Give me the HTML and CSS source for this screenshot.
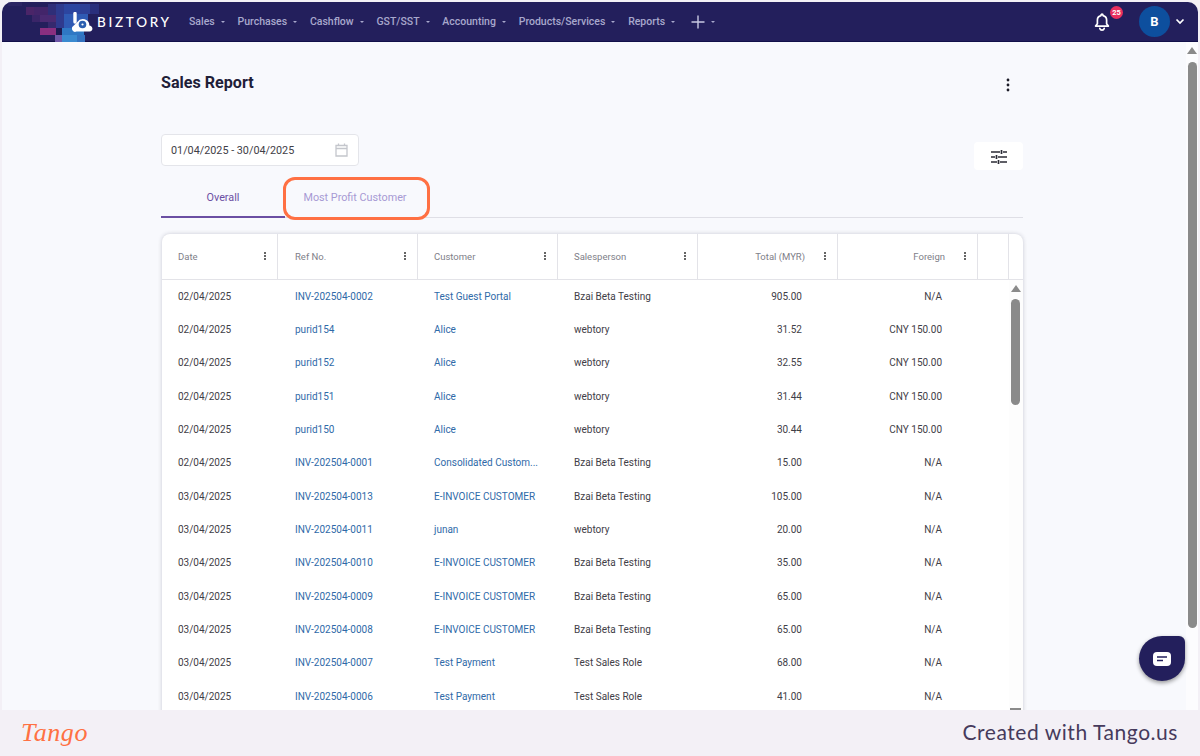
FILE: index.html
```html
<!DOCTYPE html>
<html lang="en">
<head>
<meta charset="utf-8">
<title>Sales Report</title>
<link rel="stylesheet" href="styles.css">
</head>
<body>
<div class="window">
  <header class="nav">
    <div class="brand">
      <svg class="mosaic" width="100" height="40" viewBox="0 0 100 40" aria-hidden="true">
        <rect x="6" y="0" width="14" height="4" fill="#2b2563"/>
        <rect x="24" y="5" width="8" height="8" fill="#4a2568"/>
        <rect x="32" y="5" width="14" height="8" fill="#43256a"/>
        <rect x="46" y="2" width="8" height="11" fill="#2f2e78"/>
        <rect x="54" y="2" width="8" height="10" fill="#2e3a8e"/>
        <rect x="62" y="2" width="16" height="10" fill="#2c45a0"/>
        <rect x="78" y="2" width="10" height="10" fill="#2e3f96"/>
        <rect x="88" y="2" width="9" height="10" fill="#2a2f7c"/>
        <rect x="30" y="13" width="8" height="7" fill="#3a2568"/>
        <rect x="38" y="13" width="16" height="7" fill="#4a2a72"/>
        <rect x="46" y="20" width="8" height="7" fill="#35296e"/>
        <rect x="38" y="26" width="16" height="7" fill="#8a2f80"/>
        <rect x="54" y="12" width="8" height="14" fill="#2f3a8e"/>
        <rect x="62" y="12" width="12" height="14" fill="#2f5ab4"/>
        <rect x="74" y="12" width="12" height="14" fill="#2f5ab4"/>
        <rect x="54" y="26" width="6" height="7" fill="#1b1a52"/>
        <rect x="60" y="26" width="22" height="7" fill="#2f78c4"/>
        <rect x="53" y="33" width="7" height="7" fill="#6f57a8"/>
        <rect x="60" y="33" width="15" height="7" fill="#3a8ad0"/>
        <rect x="75" y="33" width="8" height="7" fill="#3372c0"/>
      </svg>
      <svg class="logo-mark" width="22" height="20" viewBox="0 0 22 20" aria-hidden="true">
        <path d="M3 1.500V10" fill="none" stroke="#fff" stroke-width="3.400" stroke-linecap="round"/>
        <path d="M4.500 19.500H17.500a2.800 2.800 0 0 0 2.500-4.200 2.800 2.800 0 0 0-2.600-1.800 6.500 6.500 0 0 0-12-3.500L1.300 14a3.200 3.200 0 0 0 3.200 5.500z" fill="#fff"/>
        <circle cx="10.500" cy="12.500" r="3.800" fill="#2b5fb0"/>
        <circle cx="10.500" cy="12.500" r="1.100" fill="#fff"/>
      </svg>
      <span class="brand-name">BIZTORY</span>
    </div>
    <nav class="menu">
      <a class="menu-item">Sales</a>
      <a class="menu-item">Purchases</a>
      <a class="menu-item">Cashflow</a>
      <a class="menu-item">GST/SST</a>
      <a class="menu-item">Accounting</a>
      <a class="menu-item">Products/Services</a>
      <a class="menu-item">Reports</a>
      <a class="menu-item menu-plus">
        <svg width="14" height="14" viewBox="0 0 14 14" aria-hidden="true"><path d="M7 0.500v13M0.500 7h13" stroke="#c9c9e2" stroke-width="1.400"/></svg>
      </a>
    </nav>
    <div class="nav-right">
      <div class="bell">
        <svg width="16" height="18" viewBox="0 0 16 18" aria-hidden="true"><path d="M8 1.200a1 1 0 0 1 1 1v.4a4.600 4.600 0 0 1 3.600 4.500v3.600l1.800 2.400H1.600l1.800-2.400V7.100A4.600 4.600 0 0 1 7 2.600v-.4a1 1 0 0 1 1-1z" fill="none" stroke="#fff" stroke-width="1.700" stroke-linejoin="round"/><path d="M5.800 15.400a2.300 2.300 0 0 0 4.400 0" fill="none" stroke="#fff" stroke-width="1.700" stroke-linecap="round"/></svg>
        <span class="badge">25</span>
      </div>
      <div class="avatar">B</div>
      <svg class="chev" width="10" height="7" viewBox="0 0 10 7" aria-hidden="true"><path d="M1.500 1.500L5 5l3.500-3.500" fill="none" stroke="#fff" stroke-width="1.700"/></svg>
    </div>
  </header>

  <div class="stage">
    <main class="content">
      <div class="title-row">
        <h1 class="title">Sales Report</h1>
        <svg class="kebab-lg" width="4" height="14" viewBox="0 0 4 14" aria-hidden="true"><circle cx="2" cy="2" r="1.400"/><circle cx="2" cy="7" r="1.400"/><circle cx="2" cy="12" r="1.400"/></svg>
      </div>
      <div class="filter-row">
        <div class="date-box">
          <span>01/04/2025 - 30/04/2025</span>
          <svg width="13" height="14" viewBox="0 0 13 14" aria-hidden="true"><path d="M1 2.500h11v10.500H1zM1 5.500h11M3.500 0.500v2M9.500 0.500v2" fill="none" stroke="#c4c6cc" stroke-width="1.300"/></svg>
        </div>
        <div class="tune-btn">
          <svg width="16" height="14" viewBox="0 0 16 14" aria-hidden="true"><path d="M0 2h9M12 2h4M0 7h4M7 7h9M0 12h6M9 12h7" stroke="#2b2b35" stroke-width="1.700"/><path d="M10.500 0v4M5.500 5v4M7.500 10v4" stroke="#2b2b35" stroke-width="1.700"/></svg>
        </div>
      </div>
      <div class="tabs">
        <div class="tab tab-active">Overall</div>
        <div class="tab">Most Profit Customer</div>
        <div class="tab-highlight"></div>
      </div>
      <section class="card">
        <div class="row head">
          <div class="hcell"><span>Date</span><i class="dots"></i></div>
          <div class="hcell"><span>Ref No.</span><i class="dots"></i></div>
          <div class="hcell"><span>Customer</span><i class="dots"></i></div>
          <div class="hcell"><span>Salesperson</span><i class="dots"></i></div>
          <div class="hcell num"><span>Total (MYR)</span><i class="dots"></i></div>
          <div class="hcell num"><span>Foreign</span><i class="dots"></i></div>
          <div class="hcell"></div>
          <div class="hcell last"></div>
        </div>
        <div class="rows">
          <div class="row"><div>02/04/2025</div><a>INV-202504-0002</a><a>Test Guest Portal</a><div>Bzai Beta Testing</div><div class="num">905.00</div><div class="num">N/A</div></div>
          <div class="row"><div>02/04/2025</div><a>purid154</a><a>Alice</a><div>webtory</div><div class="num">31.52</div><div class="num">CNY 150.00</div></div>
          <div class="row"><div>02/04/2025</div><a>purid152</a><a>Alice</a><div>webtory</div><div class="num">32.55</div><div class="num">CNY 150.00</div></div>
          <div class="row"><div>02/04/2025</div><a>purid151</a><a>Alice</a><div>webtory</div><div class="num">31.44</div><div class="num">CNY 150.00</div></div>
          <div class="row"><div>02/04/2025</div><a>purid150</a><a>Alice</a><div>webtory</div><div class="num">30.44</div><div class="num">CNY 150.00</div></div>
          <div class="row"><div>02/04/2025</div><a>INV-202504-0001</a><a>Consolidated Custom...</a><div>Bzai Beta Testing</div><div class="num">15.00</div><div class="num">N/A</div></div>
          <div class="row"><div>03/04/2025</div><a>INV-202504-0013</a><a>E-INVOICE CUSTOMER</a><div>Bzai Beta Testing</div><div class="num">105.00</div><div class="num">N/A</div></div>
          <div class="row"><div>03/04/2025</div><a>INV-202504-0011</a><a>junan</a><div>webtory</div><div class="num">20.00</div><div class="num">N/A</div></div>
          <div class="row"><div>03/04/2025</div><a>INV-202504-0010</a><a>E-INVOICE CUSTOMER</a><div>Bzai Beta Testing</div><div class="num">35.00</div><div class="num">N/A</div></div>
          <div class="row"><div>03/04/2025</div><a>INV-202504-0009</a><a>E-INVOICE CUSTOMER</a><div>Bzai Beta Testing</div><div class="num">65.00</div><div class="num">N/A</div></div>
          <div class="row"><div>03/04/2025</div><a>INV-202504-0008</a><a>E-INVOICE CUSTOMER</a><div>Bzai Beta Testing</div><div class="num">65.00</div><div class="num">N/A</div></div>
          <div class="row"><div>03/04/2025</div><a>INV-202504-0007</a><a>Test Payment</a><div>Test Sales Role</div><div class="num">68.00</div><div class="num">N/A</div></div>
          <div class="row"><div>03/04/2025</div><a>INV-202504-0006</a><a>Test Payment</a><div>Test Sales Role</div><div class="num">41.00</div><div class="num">N/A</div></div>
        </div>
        <div class="card-scroll">
          <i class="arrow-up"></i>
          <i class="card-thumb"></i>
          <i class="card-down"></i>
        </div>
      </section>
    </main>
    <aside class="page-scroll">
      <i class="arrow-up"></i>
      <i class="page-thumb"></i>
    </aside>
    <button class="chat" aria-label="Chat">
      <svg width="18" height="14" viewBox="0 0 18 14" aria-hidden="true"><rect width="18" height="14" rx="4" fill="#fff"/><path d="M4 5h10M4 8.500h6" stroke="#231f5c" stroke-width="1.500"/></svg>
    </button>
  </div>
</div>
<footer class="tango">
  <span class="tango-logo">Tango</span>
  <span class="tango-note">Created with Tango.us</span>
</footer>
</body>
</html>
```
FILE: styles.css
```css
* { box-sizing: border-box; }
html, body { margin: 0; height: 756px; overflow: hidden; }
body {
  background: #f3f0f6;
  display: flex;
  flex-direction: column;
  font-family: Roboto, "Liberation Sans", sans-serif;
  color: #3f4047;
}
.window {
  height: 708px;
  margin: 2px 2px 0;
  border-radius: 10px 10px 0 0;
  overflow: hidden;
  display: flex;
  flex-direction: column;
  background: #f8f9fd;
  flex: none;
}
.nav {
  height: 40px;
  flex: none;
  display: flex;
  align-items: center;
  background: #231f5c;
  border-bottom: 1px solid #12104a;
  position: relative;
}
.brand { width: 187px; flex: none; display: flex; align-items: center; height: 100%; padding-left: 70px; }
.mosaic { position: absolute; left: 0; top: 0; }
.logo-mark { position: relative; margin-right: 3px; margin-top: 1px; }
.brand-name {
  position: relative;
  font-family: Lato, sans-serif;
  font-size: 13.500px;
  font-weight: 500;
  letter-spacing: 2.700px;
  color: #fff;
}
.menu { display: flex; align-items: center; gap: 11px; }
.menu-item {
  display: flex;
  align-items: center;
  gap: 6px;
  font-size: 10.500px;
  font-weight: 500;
  color: #a8a8cc;
}
.menu-item::after {
  content: "";
  width: 0;
  height: 0;
  border: 2.500px solid transparent;
  border-top-color: #a8a8cc;
  border-bottom: 0;
  margin-right: 1.800px;
}
.menu-plus { margin-left: 3px; }
.nav-right { margin-left: auto; display: flex; align-items: center; padding-right: 13px; }
.bell { position: relative; width: 16px; height: 18px; margin-right: 29px; }
.bell svg { display: block; }
.badge {
  position: absolute;
  left: 16px;
  top: -7px;
  width: 13px;
  height: 13px;
  border-radius: 50%;
  background: #ea2f5e;
  color: #fff;
  font-size: 7.500px;
  font-weight: 700;
  line-height: 13px;
  text-align: center;
}
.avatar {
  width: 31px;
  height: 31px;
  border-radius: 50%;
  background: #0d4f9e;
  color: #fff;
  font-size: 13px;
  font-weight: 700;
  line-height: 31px;
  text-align: center;
  margin-right: 5px;
}
.stage { position: relative; flex: 1; min-height: 0; display: flex; }
.content { flex: none; width: 1184px; padding-left: 159px; }
.title-row {
  width: 849px;
  height: 92px;
  display: flex;
  justify-content: space-between;
  align-items: flex-start;
  padding-top: 29px;
}
.title { margin: 0; font-size: 16.100px; line-height: 23px; font-weight: 700; color: #1f2038; }
.kebab-lg { margin-top: 7px; fill: #1c1c28; }
.filter-row { width: 862px; height: 44px; display: flex; justify-content: space-between; align-items: flex-start; }
.date-box {
  width: 198px;
  height: 32px;
  background: #fff;
  border: 1px solid #e4e5ea;
  border-radius: 4px;
  padding: 0 10px 0 9px;
  display: flex;
  align-items: center;
  justify-content: space-between;
  font-size: 10.800px;
  color: #3f4047;
}
.tune-btn {
  width: 49px;
  height: 28px;
  margin-top: 8px;
  padding-top: 1px;
  background: #fff;
  border-radius: 4px;
  display: flex;
  align-items: center;
  justify-content: center;
}
.tabs {
  position: relative;
  width: 862px;
  height: 40px;
  display: flex;
  border-bottom: 1px solid #dfdfe6;
}
.tab {
  width: 140px;
  font-size: 10.800px;
  line-height: 39px;
  text-align: center;
  color: #a79ad4;
}
.tab:first-child { width: 124px; }
.tab-active { color: #6b4fa3; border-bottom: 2px solid #6b4fa3; height: 40px; }
.tab-highlight {
  position: absolute;
  left: 122px;
  top: -1px;
  width: 147px;
  height: 43px;
  border: 3.500px solid #ff7043;
  border-radius: 12px;
}
.card {
  position: relative;
  width: 861px;
  margin: 16px 0 0 1px;
  background: #fff;
  border-radius: 8px;
  box-shadow: 0 0 4px rgba(40, 40, 70, .22);
  height: 600px;
}
.row {
  display: grid;
  grid-template-columns: 116px 140px 140px 140px 140px 140px 31px 14px;
  height: 33.330px;
  align-items: center;
  font-size: 10px;
}
.row > div, .row > a { padding: 0 16px; white-space: nowrap; overflow: hidden; }
.row > a:nth-child(2) { padding-left: 17px; }
.row > .num { text-align: right; padding-right: 36px; }
.head { height: 46px; border-bottom: 1px solid #e3e3e8; color: #808089; font-size: 9.500px; }
.rows { margin-top: -.35px; }
.row > a { color: #2f6aa8; }
.hcell {
  height: 100%;
  display: flex;
  align-items: center;
  justify-content: space-between;
  border-right: 1px solid #e3e3e8;
}
.row > .hcell { padding: 0 11px 0 16px; overflow: visible; }
.row > .hcell:nth-child(2) { padding-left: 17px; }
.row > .hcell.num { justify-content: flex-end; gap: 19px; padding-right: 11px; }
.row > .hcell.last { border-right: 0; }
.dots {
  width: 2px;
  height: 2px;
  border-radius: 50%;
  background: #333;
  box-shadow: 0 -3px 0 #333, 0 3px 0 #333;
  margin-bottom: 2px;
}
.card-scroll {
  position: absolute;
  right: 0;
  top: 46px;
  width: 14px;
  bottom: 0;
  background: #fdfdfd;
}
.arrow-up {
  display: block;
  width: 0;
  height: 0;
  border: 5px solid transparent;
  border-top: 0;
  border-bottom: 7px solid #8a8a8a;
}
.card-scroll .arrow-up { position: absolute; left: 2px; top: 5px; }
.card-thumb {
  position: absolute;
  left: 2px;
  top: 19px;
  width: 9px;
  height: 106px;
  border-radius: 5px;
  background: #8a8a8a;
}
.card-down {
  position: absolute;
  left: 1px;
  top: 428px;
  width: 11px;
  height: 2px;
  background: #8a8a8a;
}
.page-scroll { position: relative; flex: none; width: 12px; background: #fcfcfe; }
.page-scroll .arrow-up { position: absolute; left: 1px; top: 5px; }
.page-thumb {
  position: absolute;
  left: 2px;
  top: 20px;
  width: 9px;
  height: 566px;
  border-radius: 5px;
  background: #8a8a8a;
}
.chat {
  position: absolute;
  left: 1137px;
  top: 594px;
  width: 46px;
  height: 45px;
  border: 0;
  padding: 0;
  border-radius: 50% 6px 50% 50%;
  background: #231f5c;
  box-shadow: 0 2px 4px rgba(0, 0, 0, .4);
  display: flex;
  align-items: center;
  justify-content: center;
}
.tango {
  height: 46px;
  flex: none;
  display: flex;
  align-items: center;
  justify-content: space-between;
  padding: 0 22px 0 21px;
}
.tango-logo {
  font-family: "Liberation Serif", serif;
  font-style: italic;
  font-size: 26px;
  letter-spacing: .6px;
  color: #ff7043;
}
.tango-note {
  font-family: Lato, sans-serif;
  font-size: 21px;
  letter-spacing: .55px;
  color: #463a5c;
  margin-bottom: 3px;
}
```
